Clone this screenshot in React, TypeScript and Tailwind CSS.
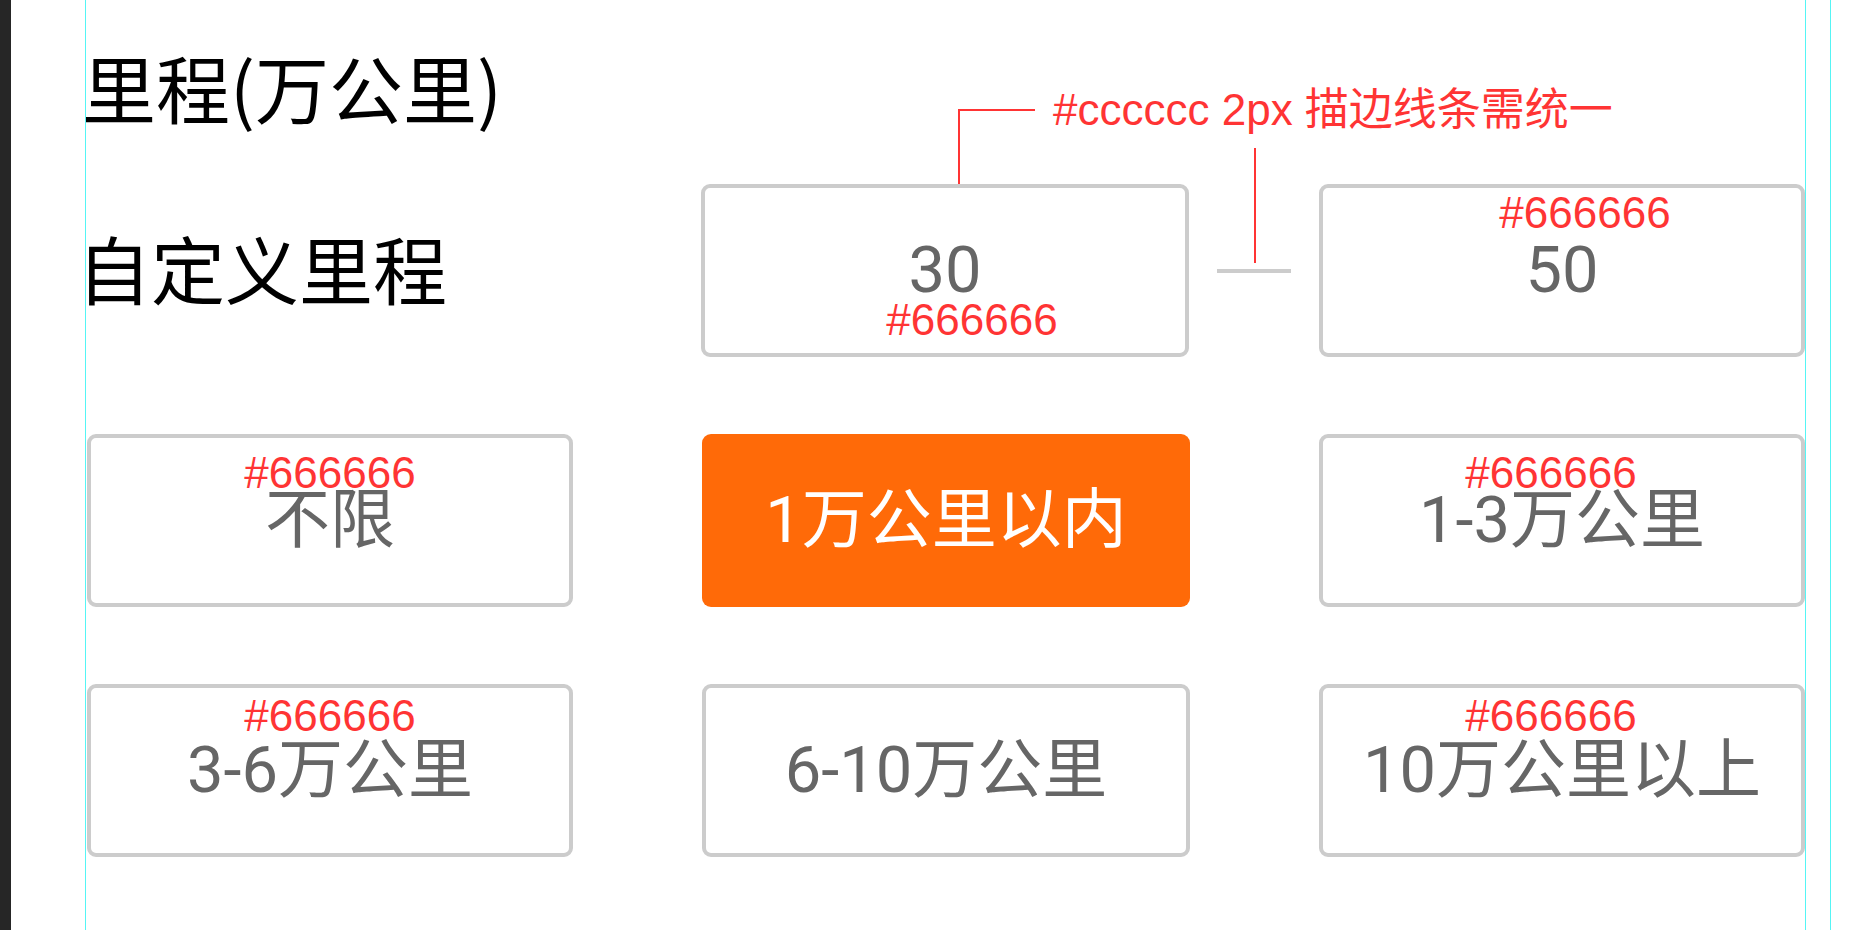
import React from "react";

const RED = "text-[#ff3434]";

function Label({ top, shift, children }: { top: string; shift: string; children?: React.ReactNode }) {
  return (
    <span
      className={`pointer-events-none absolute ${top} ${shift} -translate-x-1/2 whitespace-nowrap font-['Liberation_Sans','Noto_Sans_CJK_SC',sans-serif] text-[44px] leading-none ${RED}`}
    >
      {children}
    </span>
  );
}

function Box({
  text,
  active,
  wide,
  label,
}: {
  text: string;
  active?: boolean;
  wide?: boolean;
  label?: React.ReactNode;
}) {
  const w = wide ? "w-[488px]" : "w-[486px]";
  return (
    <div
      className={
        active
          ? `relative flex h-[173px] ${w} shrink-0 items-center justify-center rounded-[9px] bg-[#ff6a08] font-['Roboto','Noto_Sans_CJK_SC',sans-serif] text-[65px] leading-none text-white`
          : `relative flex h-[173px] ${w} shrink-0 items-center justify-center rounded-[9px] border-4 border-[#cccccc] bg-white font-['Roboto','Noto_Sans_CJK_SC',sans-serif] text-[65px] leading-none text-[#666666]`
      }
    >
      <span>{text}</span>
      {label}
    </div>
  );
}

export default function App() {
  return (
    <div className="relative flex h-[930px] w-[1857px] overflow-hidden bg-white">
      <div className="h-full w-[11px] shrink-0 bg-[#262626]" />
      <div className="relative flex-1">
        {/* guide lines */}
        <div className="pointer-events-none absolute left-[74px] top-0 h-full w-px bg-[#55f5f5]" />
        <div className="pointer-events-none absolute left-[1794px] top-0 h-full w-px bg-[#55f5f5]" />
        <div className="pointer-events-none absolute left-[1819px] top-0 h-full w-px bg-[#55f5f5]" />

        {/* annotation */}
        <div className="pointer-events-none absolute left-[947px] top-[109px] h-[75px] w-[77px] border-l-2 border-t-2 border-[#ff3434]" />
        <div
          className={`pointer-events-none absolute left-[1042px] top-[88px] whitespace-nowrap font-['Liberation_Sans','Noto_Sans_CJK_SC',sans-serif] text-[44px] leading-none ${RED}`}
        >
          #cccccc 2px 描边线条需统一
        </div>
        <div className="pointer-events-none absolute left-[1243px] top-[148px] h-[115px] w-[2px] bg-[#ff3434]" />

        <div className="w-[1793px] pl-[76px] pt-[49px]">
          <h1 className="-ml-[5px] font-['Noto_Sans_CJK_SC',sans-serif] text-[74px] font-normal leading-none text-black">
            里程(万公里)
          </h1>

          <div className="mt-[61px] flex flex-col gap-[77px]">
            <div className="flex items-center">
              <div className="-ml-[10px] -mt-[8px] w-[624px] shrink-0 font-['Noto_Sans_CJK_SC',sans-serif] text-[74px] leading-none text-black">
                自定义里程
              </div>
              <Box text="30" wide label={<Label top="top-[110px]" shift="left-[calc(50%+27px)]">#666666</Label>} />
              <div className="flex w-[130px] shrink-0 items-center justify-center">
                <div className="h-[4px] w-[74px] bg-[#cccccc]" />
              </div>
              <Box text="50" label={<Label top="top-[3px]" shift="left-[calc(50%+23px)]">#666666</Label>} />
            </div>

            <div className="flex items-center gap-[129px]">
              <Box text="不限" label={<Label top="top-[13px]" shift="left-1/2">#666666</Label>} />
              <Box text="1万公里以内" active wide />
              <Box text="1-3万公里" label={<Label top="top-[13px]" shift="left-[calc(50%-11px)]">#666666</Label>} />
            </div>

            <div className="flex items-center gap-[129px]">
              <Box text="3-6万公里" label={<Label top="top-[6px]" shift="left-1/2">#666666</Label>} />
              <Box text="6-10万公里" wide />
              <Box text="10万公里以上" label={<Label top="top-[6px]" shift="left-[calc(50%-11px)]">#666666</Label>} />
            </div>
          </div>
        </div>
      </div>
    </div>
  );
}
